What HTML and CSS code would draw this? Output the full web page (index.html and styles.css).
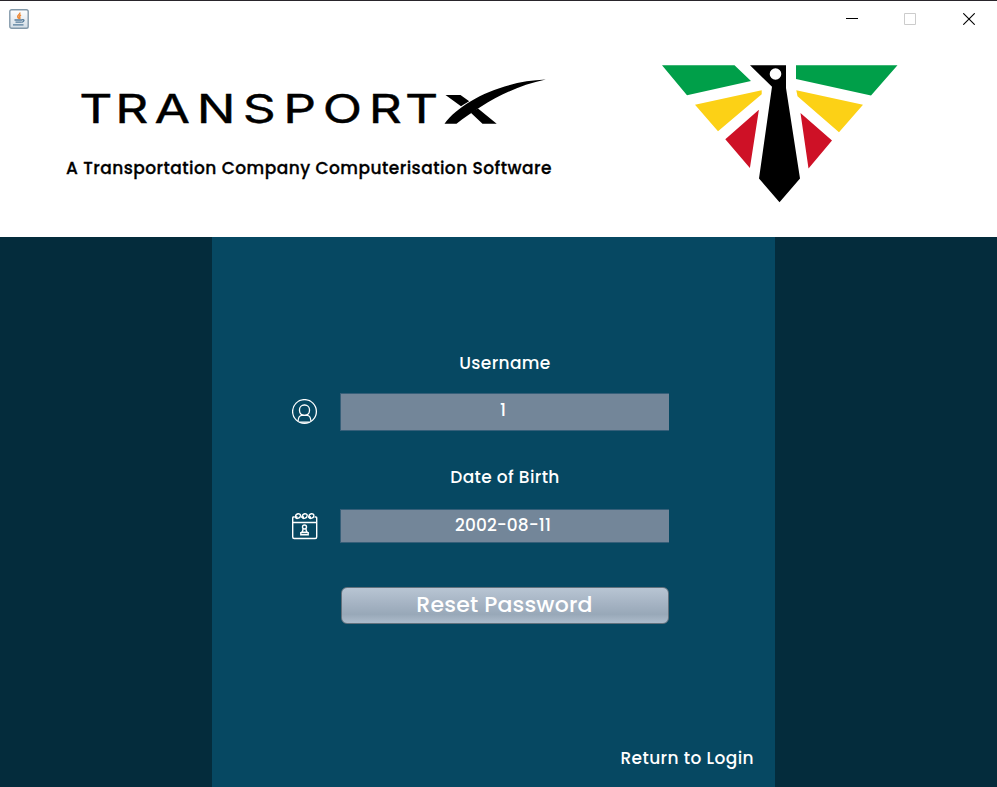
FILE: index.html
```html
<!DOCTYPE html>
<html lang="en">
<head>
<meta charset="utf-8">
<title>TransportX</title>
<link rel="stylesheet" href="styles.css">
</head>
<body>
<div class="window">
  <div class="titlebar">
    <svg class="app-icon" width="20" height="20" viewBox="0 0 20 20">
      <defs><linearGradient id="cup" x1="0" y1="0" x2="0" y2="1"><stop offset="0" stop-color="#fff"/><stop offset="1" stop-color="#d3dde6"/></linearGradient></defs>
      <rect x=".8" y=".8" width="18.4" height="18.4" rx="1.8" fill="url(#cup)" stroke="#8399aa" stroke-width="1.4"/>
      <path d="M10.800 3.500c.7 2-2.600 2.500-2.100 4.200.2.800 1 1.200.8 2.100M12 6c-1.700.8-1.800 1.600-1.200 2.300.4.600.1 1.200-.4 1.600" fill="none" stroke="#ed8a38" stroke-width="1.500"/>
      <path d="M5.500 11h7.800M6.500 13.200h6M4 15.800h10.500M13.300 10.700c2.600-.3 2 2-.6 2.600" fill="none" stroke="#557c9b" stroke-width="1.300"/>
    </svg>
    <div class="controls">
      <svg width="12" height="12" viewBox="0 0 12 12"><path d="M0 5.500h12" stroke="#000"/></svg>
      <svg width="12" height="12" viewBox="0 0 12 12"><path d="M.5.500h11v11H.5z" fill="none" stroke="#ccc"/></svg>
      <svg width="12" height="12" viewBox="0 0 12 12"><path d="M.3.300l11.400 11.400M11.700.300.3 11.700" stroke="#000" stroke-width="1.100"/></svg>
    </div>
  </div>
  <header class="header">
    <div class="brand">
      <svg class="wordmark" width="480" height="66" viewBox="70 68 480 66">
        <text class="wordmark-text" transform="translate(0 123.200) scale(1.320 1)" x="60 87.300 117 149 184 214.500 244.500 279.300 306.800" y="0">TRANSPORT</text>
        <path d="M445.500 95h15l8.700 6.200q-4 2.300-8.200 5zM470.800 112.800q3.500-2.700 7.200-4.300l18.700 15.300h-14.200z"/>
        <path d="M444.500 123.800C461 101 503 81 545.800 79.600 508 87.500 480 106 456.500 123.800z"/>
      </svg>
      <p class="tagline">A Transportation Company Computerisation Software</p>
    </div>
    <svg class="emblem" width="236" height="138" viewBox="662 65 236 138">
      <g fill="#009f49"><path d="M662 65.300h72.500L751 81l-64 14.300zM796 65.300h101.500L871 95.500 796 79z"/></g>
      <g fill="#fcd116"><path d="M695 104.800l66.700-14.500v4L718 131.300zM796.300 90.300l66.700 14.400-24 27.600-41.500-36z"/></g>
      <g fill="#ce1126"><path d="M725.300 139.300l33.600-29.500-9 58.300zM800.500 113l31.500 27.500-23.500 28z"/></g>
      <path d="M750 65.300h36V88l14 90.500-20.500 23.700-20.500-23.700 13-91.800z"/>
      <circle cx="775.500" cy="74" r="5.800" fill="#fff"/>
    </svg>
  </header>
  <main class="stage">
    <section class="panel">
      <form class="form">
        <label class="label" for="user">Username</label>
        <div class="row row-user">
          <svg width="26" height="26" viewBox="0 0 26 26" fill="none" stroke="#fff" stroke-width="1.300"><circle cx="12.500" cy="12.500" r="11.900"/><rect x="7.500" y="6" width="10" height="10.300" rx="4.700"/><path d="M6 22.300c.3-4.500 2.300-6 4-6h5c1.900 0 3.700 1.500 4 6M7.500 23.200h10"/></svg>
          <input class="field" id="user" type="text" value="1">
        </div>
        <label class="label label-dob" for="dob">Date of Birth</label>
        <div class="row row-dob">
          <svg width="26" height="27" viewBox="0.500 0.500 26 27" fill="none" stroke="#fff" stroke-width="1.400"><path d="M3 4.500H1.500q-.3 0-.3 1v19q0 1.500 1.500 1.500h21q1.500 0 1.500-1.500v-19q0-1-.8-1H23M1 10h24"/><path d="M4 4.500C4 .5 9 .5 9 3S5 7 4 5M10.700 4.500c0-4 5-4 5-1.500s-4 4-5 2M17.400 4.500c0-4 5-4 5-1.500s-4 4-5 2M3 4.500h3M9.500 4.500h3M16.500 4.500h3"/><circle cx="13" cy="14.500" r="2"/><path d="M11.500 16.500c0 1.800-.5 2.500-1.200 3.300h5.400c-.7-.8-1.200-1.500-1.200-3.300M9.300 22.300v-2.200h7.400v2.200z"/></svg>
          <input class="field" id="dob" type="text" value="2002-08-11">
        </div>
        <button class="reset" type="button">Reset Password</button>
      </form>
      <a class="return">Return to Login</a>
    </section>
  </main>
</div>
</body>
</html>
```
FILE: styles.css
```css
* { box-sizing: border-box; }
body {
  margin: 0;
  font-family: Poppins, Inter, "Liberation Sans", sans-serif;
  background: #fff;
}
.window {
  height: 787px;
  display: flex;
  flex-direction: column;
  overflow: hidden;
  border-top: 1px solid #29252b;
}
.titlebar {
  height: 36px;
  flex: none;
  display: flex;
  justify-content: space-between;
  align-items: center;
  padding: 0 22px 0 9px;
}
.controls { display: flex; gap: 47px; }
.controls svg:first-child { margin-right: -1px; }
.header {
  height: 200px;
  flex: none;
  display: flex;
  justify-content: space-between;
  align-items: flex-start;
  padding: 28px 99px 0 66px;
}
.brand { padding-top: 3px; }
.wordmark { display: block; margin-left: 4px; }
.wordmark-text {
  font: 400 39px Inter, sans-serif;
  stroke: #000;
  stroke-width: 0.4px;
}
.tagline {
  margin: 21px 0 0;
  font-size: 17px;
  line-height: 26px;
  font-weight: 500;
  letter-spacing: 0.460px;
  white-space: nowrap;
  color: #000;
  -webkit-text-stroke: 0.3px #000;
}
.emblem { display: block; }
.stage {
  flex: 1;
  background: #042c3c;
  padding-left: 212px;
}
.panel {
  width: 563px;
  height: 100%;
  background: #064862;
  display: flex;
  flex-direction: column;
  justify-content: space-between;
  color: #fff;
}
.form {
  width: 378px;
  margin-left: 79px;
  padding-top: 113px;
  display: flex;
  flex-direction: column;
}
.label {
  margin-left: 50px;
  height: 26px;
  line-height: 26px;
  text-align: center;
  font-size: 17px;
  font-weight: 500;
  letter-spacing: 0.360px;
}
.row {
  display: flex;
  align-items: center;
  justify-content: space-between;
}
.row svg { margin-left: 1px; }
.row-user { margin-top: 17px; height: 38px; }
.row-dob { margin-top: 19px; height: 34px; }
.label-dob { margin-top: 33px; }
.field {
  width: 329px;
  height: 100%;
  padding: 0 4px 4px 0;
  border: 1px solid #365f79;
  border-right-width: 0;
  background: #738699;
  color: #fff;
  font: 500 17px Poppins, Inter, sans-serif;
  letter-spacing: 0.1px;
  text-align: center;
}
.row-dob .field { padding-bottom: 3px; }
.reset {
  width: 328px;
  height: 37px;
  margin: 44px 0 0 50px;
  padding: 0 1px 7px 0;
  border: 1px solid #62717d;
  border-radius: 6px;
  background: linear-gradient(#b8c5d3, #a5b3c3 45%, #98a8b8 75%, #adbccb);
  color: #fff;
  font: 500 22px Poppins, Inter, sans-serif;
  letter-spacing: 0.180px;
}
.return {
  align-self: flex-end;
  margin: 0 21px 16px 0;
  font-size: 17px;
  line-height: 26px;
  font-weight: 500;
  letter-spacing: 0.400px;
}
```
